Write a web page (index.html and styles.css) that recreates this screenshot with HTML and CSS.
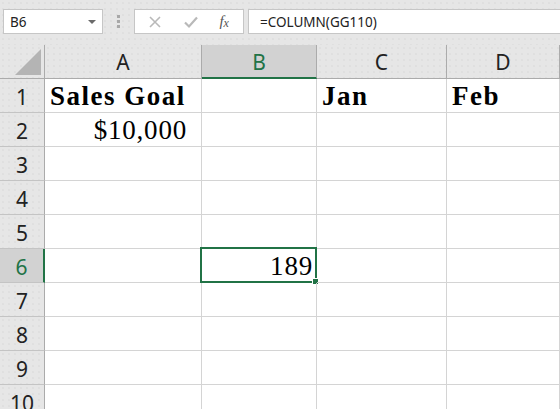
FILE: index.html
```html
<!DOCTYPE html>
<html>
<head>
  <meta charset="UTF-8">
  <title>Sheet</title>
  <link rel="stylesheet" href="styles.css">
</head>
<body>
  <!-- Formula bar -->
  <div class="toolbar">
    <div class="namebox">
      <span>B6</span>
      <span class="arrow"></span>
    </div>
    <div class="grip"><i></i><i></i><i></i></div>
    <div class="buttons">
      <svg class="btn" width="16" height="16" viewBox="0 0 16 16">
        <path d="M3 3 L13 13 M13 3 L3 13" stroke="#b9b9b9" stroke-width="1.6" fill="none"/>
      </svg>
      <svg class="btn" width="16" height="16" viewBox="0 0 16 16">
        <path d="M2 8.5 L6 12.5 L14 3.5" stroke="#b9b9b9" stroke-width="2.2" fill="none"/>
      </svg>
      <span class="fx">f<sub>x</sub></span>
    </div>
    <div class="formula">=COLUMN(GG110)</div>
  </div>

  <!-- Sheet grid -->
  <div class="sheet">
    <div class="corner"><span class="tri"></span></div>
    <div class="colhead">A</div>
    <div class="colhead active">B</div>
    <div class="colhead">C</div>
    <div class="colhead">D</div>

    <div class="rowhead">1</div>
    <div class="cell bold">Sales Goal</div>
    <div class="cell"></div>
    <div class="cell bold">Jan</div>
    <div class="cell bold">Feb</div>

    <div class="rowhead">2</div>
    <div class="cell num money">$10,000</div>
    <div class="cell"></div>
    <div class="cell"></div>
    <div class="cell"></div>

    <div class="rowhead">3</div>
    <div class="cell"></div><div class="cell"></div><div class="cell"></div><div class="cell"></div>

    <div class="rowhead">4</div>
    <div class="cell"></div><div class="cell"></div><div class="cell"></div><div class="cell"></div>

    <div class="rowhead">5</div>
    <div class="cell"></div><div class="cell"></div><div class="cell"></div><div class="cell"></div>

    <div class="rowhead active">6</div>
    <div class="cell"></div>
    <div class="cell num selected">189<span class="sel"><span class="handle"></span></span></div>
    <div class="cell"></div>
    <div class="cell"></div>

    <div class="rowhead">7</div>
    <div class="cell"></div><div class="cell"></div><div class="cell"></div><div class="cell"></div>

    <div class="rowhead">8</div>
    <div class="cell"></div><div class="cell"></div><div class="cell"></div><div class="cell"></div>

    <div class="rowhead">9</div>
    <div class="cell"></div><div class="cell"></div><div class="cell"></div><div class="cell"></div>

    <div class="rowhead">10</div>
    <div class="cell"></div><div class="cell"></div><div class="cell"></div><div class="cell"></div>
  </div>
</body>
</html>
```

FILE: styles.css
```css
/* Page */
body {
  margin: 0;
  width: 560px;
  height: 409px;
  overflow: hidden;
  background: #ffffff;
  font-family: "Noto Sans", "Open Sans", sans-serif;
}
/* Formula bar strip */
.toolbar {
  height: 45px;
  box-sizing: border-box;
  padding: 9px 0 11px 3px;
  background-color: #e6e6e6;
  background-image: radial-gradient(#d6d6d6 0.6px, transparent 0.8px);
  background-size: 6px 6px;
  display: flex;
  align-items: stretch;
}
.namebox {
  width: 100px;
  box-sizing: border-box;
  background: white;
  border: 1px solid #c6c6c6;
  display: flex;
  align-items: center;
  justify-content: space-between;
  padding: 0 6px 0 6px;
  font-size: 13.5px;
  color: #222;
}
.arrow {
  width: 0;
  height: 0;
  border-left: 4px solid transparent;
  border-right: 4px solid transparent;
  border-top: 4px solid #6a6a6a;
}
.grip {
  width: 31px;
  display: flex;
  flex-direction: column;
  align-items: center;
  justify-content: center;
  gap: 2px;
}
.grip i {
  width: 3px;
  height: 3px;
  background: #a8a8a8;
}
.buttons {
  width: 110px;
  box-sizing: border-box;
  background: white;
  border: 1px solid #c6c6c6;
  display: flex;
  align-items: center;
  justify-content: space-around;
  padding: 0 4px 0 2px;
}
.fx {
  font-family: "Liberation Serif", serif;
  font-style: italic;
  font-size: 15px;
  color: #555;
  line-height: 1;
}
.fx sub {
  font-size: 12px;
  vertical-align: -1px;
}
.formula {
  flex: 1;
  margin-left: 4px;
  background: white;
  border: 1px solid #c6c6c6;
  border-right: none;
  display: flex;
  align-items: center;
  padding-left: 11px;
  font-size: 13.5px;
  color: #222;
}
/* Grid */
.sheet {
  display: grid;
  grid-template-columns: 45px 157px 115px 130px 1fr;
  grid-auto-rows: 34px;
}
.corner, .colhead, .rowhead {
  background-color: #e6e6e6;
  background-image: radial-gradient(#d6d6d6 0.6px, transparent 0.8px);
  background-size: 6px 6px;
  box-sizing: border-box;
  color: #222;
  font-size: 21px;
  display: flex;
  align-items: center;
  justify-content: center;
}
.corner {
  border-right: 1px solid #ababab;
  border-bottom: 1px solid #ababab;
  position: relative;
}
.tri {
  position: absolute;
  left: 15px;
  bottom: 3px;
  width: 0;
  height: 0;
  border-left: 26px solid transparent;
  border-bottom: 26px solid #b4b4b4;
}
.colhead {
  border-right: 1px solid #ababab;
  border-bottom: 1px solid #ababab;
  padding-top: 1px;
}
.colhead.active {
  background: #d2d2d2;
  color: #217346;
  border-bottom: 2px solid #217346;
}
.rowhead {
  border-right: 1px solid #ababab;
  border-bottom: 1px solid #c4c4c4;
  padding-top: 2px;
}
.rowhead.active {
  background: #d2d2d2;
  color: #217346;
  border-right: 2px solid #217346;
}
.cell {
  box-sizing: border-box;
  border-right: 1px solid #d4d4d4;
  border-bottom: 1px solid #d4d4d4;
  font-family: "Liberation Serif", "DejaVu Serif", serif;
  font-size: 27px;
  line-height: 1;
  letter-spacing: 0.8px;
  color: #000;
  display: flex;
  align-items: flex-end;
  padding: 0 4px 2px 5px;
  white-space: nowrap;
  position: relative;
}
.bold {
  font-weight: bold;
  letter-spacing: 1.5px;
}
.num {
  justify-content: flex-end;
  padding-right: 3px;
}
.money {
  padding-right: 14px;
}
/* Active cell outline */
.sel {
  position: absolute;
  left: -2px;
  top: -2px;
  right: -1px;
  bottom: -1px;
  border: 2px solid #217346;
}
.handle {
  position: absolute;
  right: -4px;
  bottom: -4px;
  width: 5px;
  height: 5px;
  background: #217346;
  border: 1px solid white;
}
```
